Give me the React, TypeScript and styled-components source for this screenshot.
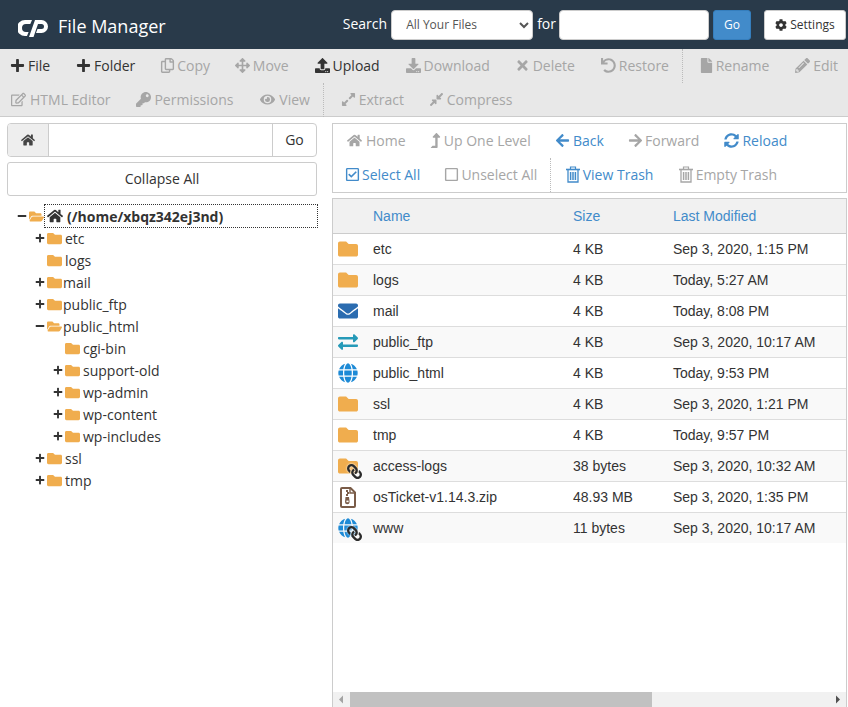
import React from "react";
import styled, { createGlobalStyle } from "styled-components";
import {
  FaArrowLeft,
  FaArrowRight,
  FaArrowsAlt,
  FaCog,
  FaCompressAlt,
  FaDownload,
  FaEnvelope,
  FaExchangeAlt,
  FaExpandAlt,
  FaEye,
  FaFile,
  FaFolder,
  FaFolderOpen,
  FaGlobe,
  FaHome,
  FaKey,
  FaLevelUpAlt,
  FaLink,
  FaMinus,
  FaPencilAlt,
  FaPlus,
  FaRegCheckSquare,
  FaRegCopy,
  FaRegEdit,
  FaRegSquare,
  FaSyncAlt,
  FaTimes,
  FaUndo,
  FaUpload,
} from "react-icons/fa";

const GlobalStyle = createGlobalStyle`
  html, body {
    margin: 0;
    height: 100%;
    overflow: hidden;
    background: #fff;
    font-family: "Open Sans", sans-serif;
    font-size: 14px;
    color: #333;
  }
  * { box-sizing: border-box; }
`;

const Page = styled.div`
  height: 100vh;
  display: flex;
  flex-direction: column;
`;

const TopBar = styled.header`
  height: 49px;
  flex: none;
  background: #293a4a;
  display: flex;
  align-items: center;
  padding: 0 2px 0 18px;
  color: #fff;
`;

const Logo = styled.svg`
  width: 30px;
  height: 18px;
  margin-right: 10px;
  flex: none;
  position: relative;
  top: 3px;
`;

const Title = styled.h1`
  margin: 0;
  font-size: 18px;
  font-weight: 400;
  flex: 1;
  position: relative;
  top: 1px;
`;

const SearchLabel = styled.label`
  font-size: 14px;
  margin: 0 4px;
  position: relative;
  top: -1px;
`;

const ForLabel = styled(SearchLabel)`
  margin-right: 3px;
`;

const SearchSelect = styled.select`
  width: 142px;
  height: 30px;
  background: #fff;
  border: 1px solid #ccc;
  border-radius: 4px;
  font-family: "Open Sans", sans-serif;
  font-size: 12px;
  color: #555;
  padding-left: 10px;
`;

const SearchInput = styled.input`
  width: 150px;
  height: 30px;
  border: 1px solid #ccc;
  border-radius: 4px;
  background: #fff;
`;

const GoButton = styled.button`
  width: 38px;
  height: 30px;
  margin-left: 4px;
  background: #428bca;
  border: 1px solid #357ebd;
  border-radius: 3px;
  color: #fff;
  font-family: inherit;
  font-size: 12px;
  padding: 0;
`;

const SettingsButton = styled.button`
  width: 82px;
  height: 30px;
  margin-left: 13px;
  background: #fff;
  border: 1px solid #ccc;
  border-radius: 3px;
  color: #333;
  font-family: inherit;
  font-size: 12px;
  padding: 0;
  display: flex;
  align-items: center;
  justify-content: center;
  gap: 3px;
  svg { font-size: 12px; }
`;

const ActionBar = styled.nav`
  height: 68px;
  flex: none;
  background: #e8e8e8;
  border-bottom: 1px solid #ccc;
  padding-left: 10px;
`;

const ActionRow = styled.div`
  height: 34px;
  padding-bottom: 2px;
  display: flex;
  align-items: center;
  gap: 25.85px;
`;

const NavRow = styled(ActionRow)`
  gap: 25.2px;
`;

const Action = styled.span<{ $muted?: boolean; $blue?: boolean }>`
  display: inline-flex;
  align-items: center;
  gap: 3px;
  white-space: nowrap;
  font-size: 14px;
  color: ${(p) => (p.$blue ? "#428bca" : p.$muted ? "#a6a6a6" : "#333")};
`;

const IconSlot = styled.span<{ $w: number }>`
  width: ${(p) => p.$w - 3}px;
  flex: none;
  display: flex;
  justify-content: center;
  svg { font-size: 15px; flex: none; }
`;

const Divider = styled.span<{ $after?: number }>`
  align-self: stretch;
  width: 0;
  margin: 0 ${(p) => p.$after ?? -9}px -2px -13px;
  border-left: 1px dotted #bbb;
`;

const Body = styled.main`
  flex: 1;
  min-height: 0;
  display: grid;
  grid-template-columns: 310px 515px;
  column-gap: 15px;
  padding: 6px 1px 0 7px;
`;

const Sidebar = styled.aside`
  display: flex;
  flex-direction: column;
`;

const PathGroup = styled.div`
  height: 34px;
  display: flex;
  border: 1px solid #ccc;
  border-radius: 4px;
  overflow: hidden;
  font-size: 14px;
`;

const PathHome = styled.span`
  width: 41px;
  flex: none;
  background: #eee;
  border-right: 1px solid #ccc;
  display: flex;
  align-items: center;
  justify-content: center;
  color: #444;
`;

const PathInput = styled.input`
  flex: 1;
  min-width: 0;
  border: 0;
`;

const PathGo = styled.span`
  width: 44px;
  flex: none;
  border-left: 1px solid #ccc;
  padding-bottom: 2px;
  display: flex;
  align-items: center;
  justify-content: center;
`;

const CollapseAll = styled.button`
  height: 34px;
  margin-top: 5px;
  padding: 0 0 2px;
  background: #fff;
  border: 1px solid #ccc;
  border-radius: 3px;
  font-family: inherit;
  font-size: 14px;
  color: #333;
`;

const Tree = styled.ul`
  list-style: none;
  margin: 9px 0 0;
  padding: 0;
`;

const TreeRow = styled.li<{ $depth: number }>`
  height: 22px;
  display: flex;
  align-items: center;
  padding-left: ${(p) => 10 + p.$depth * 18}px;
  font-size: 14px;
  color: #333;
`;

const Toggle = styled.span`
  width: 10px;
  margin-right: 2px;
  flex: none;
  display: flex;
  align-items: center;
  justify-content: center;
  svg { font-size: 10px; color: #333; }
`;

const TreeFolder = styled.span`
  width: 15px;
  flex: none;
  display: flex;
  color: #f0ad4e;
  svg { font-size: 15px; }
`;

const TreeName = styled.span<{ $tight?: boolean }>`
  margin-left: ${(p) => (p.$tight ? 1 : 3)}px;
`;

const RootLabel = styled.span`
  flex: 1;
  height: 24px;
  margin-right: -1px;
  border: 1px dotted #333;
  display: flex;
  align-items: center;
  gap: 4px;
  padding-left: 2px;
  font-weight: 700;
  svg { font-size: 16px; }
`;

const FilesPane = styled.section`
  display: flex;
  flex-direction: column;
  min-height: 0;
`;

const FileTools = styled.div`
  height: 70px;
  flex: none;
  border: 1px solid #ccc;
  padding-left: 13px;
`;

const ListBox = styled.div`
  flex: 1;
  min-height: 0;
  margin-top: 5px;
  border-left: 1px solid #ccc;
  border-right: 1px solid #ccc;
  display: flex;
  flex-direction: column;
`;

const ListHead = styled.div`
  height: 36px;
  flex: none;
  background: #f1f1f1;
  border-top: 1px solid #ccc;
  border-bottom: 1px solid #ccc;
  display: grid;
  grid-template-columns: 40px 200px 100px 1fr;
  align-items: center;
  font-family: "Liberation Sans", sans-serif;
  font-size: 14px;
  color: #428bca;
`;

const ListRows = styled.div`
  flex: 1;
  min-height: 0;
`;

const ListRow = styled.div`
  height: 31px;
  display: grid;
  grid-template-columns: 40px 200px 100px 1fr;
  align-items: center;
  border-bottom: 1px solid #ddd;
  font-family: "Liberation Sans", sans-serif;
  font-size: 14px;
  color: #333;
  &:nth-child(even) { background: #f9f9f9; }
  &:last-child { border-bottom: 0; height: 30px; }
`;

const FileIcon = styled.span<{ $color: string }>`
  position: relative;
  width: 20px;
  height: 20px;
  margin-left: 5px;
  display: flex;
  align-items: center;
  justify-content: center;
  color: ${(p) => p.$color};
  svg { font-size: 20px; }
`;

const LinkBadge = styled.span`
  position: absolute;
  right: -4px;
  bottom: -3px;
  display: flex;
  color: #2b2b2b;
  transform: scaleX(-1);
  filter: drop-shadow(0 0 1px #fff);
  svg { font-size: 15px; }
`;

const HScroll = styled.div`
  height: 15px;
  flex: none;
  background: #f1f1f1;
  display: grid;
  grid-template-columns: 17px 302px 1fr 17px;
  align-items: center;
`;

const ScrollThumb = styled.span`
  height: 15px;
  background: #c1c1c1;
`;

const ScrollArrow = styled.svg`
  width: 17px;
  height: 15px;
`;

const TrashIcon = () => (
  <svg viewBox="0 0 14 17" width="14" height="17" fill="none" stroke="currentColor">
    <path d="M4.5 3V1h5v2" strokeWidth="1.2" />
    <path d="M0 3.5h14" strokeWidth="1.6" />
    <path d="M2 4v12h10V4" strokeWidth="1.3" />
    <path d="M4.6 6v8M7 6v8M9.4 6v8" strokeWidth="1.5" />
  </svg>
);

const ZipIcon = () => (
  <svg viewBox="0 0 16 21" width="16" height="21">
    <path
      d="M2 1h8.5L15 5.5V19a1 1 0 0 1-1 1H2a1 1 0 0 1-1-1V2a1 1 0 0 1 1-1z"
      fill="#fff"
      stroke="#7a5c48"
      strokeWidth="2"
    />
    <path d="M10 1v5h5" fill="none" stroke="#7a5c48" strokeWidth="1.4" />
    <path d="M6 3h2v2H6zM7 5h2v2H7zM6 7h2v2H6z" fill="#7a5c48" />
    <path d="M5.5 10h3.5l.6 5a2 2 0 0 1-4.6 0z" fill="#7a5c48" />
    <rect x="6.4" y="13.6" width="2.2" height="1.6" fill="#fff" />
  </svg>
);

const toolsTop = [
  { Icon: FaPlus, label: "File", w: 18 },
  { Icon: FaPlus, label: "Folder", w: 18 },
  { Icon: FaRegCopy, label: "Copy", muted: true, w: 16 },
  { Icon: FaArrowsAlt, label: "Move", muted: true, w: 17 },
  { Icon: FaUpload, label: "Upload", w: 18 },
  { Icon: FaDownload, label: "Download", muted: true, w: 18 },
  { Icon: FaTimes, label: "Delete", muted: true, w: 17 },
  { Icon: FaUndo, label: "Restore", muted: true, w: 18 },
  "divider",
  { Icon: FaFile, label: "Rename", muted: true, w: 16 },
  { Icon: FaPencilAlt, label: "Edit", muted: true, w: 18 },
];

const toolsBottom = [
  { Icon: FaRegEdit, label: "HTML Editor", muted: true, w: 20 },
  { Icon: FaKey, label: "Permissions", muted: true, w: 18 },
  { Icon: FaEye, label: "View", muted: true, w: 20 },
  "divider",
  { Icon: FaExpandAlt, label: "Extract", muted: true, w: 18 },
  { Icon: FaCompressAlt, label: "Compress", muted: true, w: 17 },
];

const navTop = [
  { Icon: FaHome, label: "Home", muted: true, w: 20 },
  { Icon: FaLevelUpAlt, label: "Up One Level", muted: true, w: 13 },
  { Icon: FaArrowLeft, label: "Back", blue: true, w: 17 },
  { Icon: FaArrowRight, label: "Forward", muted: true, w: 16 },
  { Icon: FaSyncAlt, label: "Reload", blue: true, w: 18 },
];

const navBottom = [
  { Icon: FaRegCheckSquare, label: "Select All", blue: true, w: 16 },
  { Icon: FaRegSquare, label: "Unselect All", muted: true, w: 16 },
  "divider",
  { Icon: TrashIcon, label: "View Trash", blue: true, w: 17 },
  { Icon: TrashIcon, label: "Empty Trash", muted: true, w: 17 },
];

const tree = [
  { name: "etc", depth: 1, toggle: "plus" },
  { name: "logs", depth: 1 },
  { name: "mail", depth: 1, toggle: "plus", tight: true },
  { name: "public_ftp", depth: 1, toggle: "plus", tight: true },
  { name: "public_html", depth: 1, toggle: "minus", open: true, tight: true },
  { name: "cgi-bin", depth: 2 },
  { name: "support-old", depth: 2, toggle: "plus" },
  { name: "wp-admin", depth: 2, toggle: "plus" },
  { name: "wp-content", depth: 2, toggle: "plus" },
  { name: "wp-includes", depth: 2, toggle: "plus" },
  { name: "ssl", depth: 1, toggle: "plus" },
  { name: "tmp", depth: 1, toggle: "plus" },
];

const files = [
  { name: "etc", size: "4 KB", date: "Sep 3, 2020, 1:15 PM", kind: "folder" },
  { name: "logs", size: "4 KB", date: "Today, 5:27 AM", kind: "folder" },
  { name: "mail", size: "4 KB", date: "Today, 8:08 PM", kind: "mail" },
  { name: "public_ftp", size: "4 KB", date: "Sep 3, 2020, 10:17 AM", kind: "ftp" },
  { name: "public_html", size: "4 KB", date: "Today, 9:53 PM", kind: "globe" },
  { name: "ssl", size: "4 KB", date: "Sep 3, 2020, 1:21 PM", kind: "folder" },
  { name: "tmp", size: "4 KB", date: "Today, 9:57 PM", kind: "folder" },
  { name: "access-logs", size: "38 bytes", date: "Sep 3, 2020, 10:32 AM", kind: "folder", link: true },
  { name: "osTicket-v1.14.3.zip", size: "48.93 MB", date: "Sep 3, 2020, 1:35 PM", kind: "zip" },
  { name: "www", size: "11 bytes", date: "Sep 3, 2020, 10:17 AM", kind: "globe", link: true },
];

const kindColor: Record<string, string> = {
  folder: "#f0ad4e",
  mail: "#2b6cb0",
  ftp: "#269ab8",
  globe: "#1d8ad6",
  zip: "#7a5c48",
};

const kindGlyph = (kind: string) => {
  if (kind === "mail") return <FaEnvelope />;
  if (kind === "ftp") return <FaExchangeAlt />;
  if (kind === "globe") return <FaGlobe />;
  if (kind === "zip") return <ZipIcon />;
  return <FaFolder />;
};

const renderTools = (items: any[], after?: number) =>
  items.map((item, i) =>
    item === "divider" ? (
      <Divider key={i} $after={after} />
    ) : (
      <Action key={item.label} $muted={item.muted} $blue={item.blue}>
        <IconSlot $w={item.w}>
          <item.Icon />
        </IconSlot>
        {item.label}
      </Action>
    )
  );

const App = () => {
  return (
    <Page>
      <GlobalStyle />
      <TopBar>
        <Logo viewBox="0 0 30 18">
          <path
            d="M14 1l-1.7 4H8a4 4 0 0 0 0 8h2.6L9 17H7A8 8 0 0 1 7 1z"
            fill="#fff"
          />
          <path
            d="M11 18 17 1h6.5a6.5 6.5 0 0 1 0 13H18l1.5-4h4a2.5 2.5 0 0 0 0-5H20l-4.5 13z"
            fill="#fff"
          />
        </Logo>
        <Title>File Manager</Title>
        <SearchLabel>Search</SearchLabel>
        <SearchSelect defaultValue="all">
          <option value="all">All Your Files</option>
        </SearchSelect>
        <ForLabel>for</ForLabel>
        <SearchInput />
        <GoButton>Go</GoButton>
        <SettingsButton>
          <FaCog />
          Settings
        </SettingsButton>
      </TopBar>

      <ActionBar>
        <ActionRow>{renderTools(toolsTop)}</ActionRow>
        <ActionRow>{renderTools(toolsBottom)}</ActionRow>
      </ActionBar>

      <Body>
        <Sidebar>
          <PathGroup>
            <PathHome>
              <FaHome />
            </PathHome>
            <PathInput />
            <PathGo>Go</PathGo>
          </PathGroup>
          <CollapseAll>Collapse All</CollapseAll>
          <Tree>
            <TreeRow $depth={0}>
              <Toggle>
                <FaMinus />
              </Toggle>
              <TreeFolder>
                <FaFolderOpen />
              </TreeFolder>
              <RootLabel>
                <FaHome />
                (/home/xbqz342ej3nd)
              </RootLabel>
            </TreeRow>
            {tree.map((node) => (
              <TreeRow key={node.name} $depth={node.depth}>
                <Toggle>
                  {node.toggle === "plus" && <FaPlus />}
                  {node.toggle === "minus" && <FaMinus />}
                </Toggle>
                <TreeFolder>{node.open ? <FaFolderOpen /> : <FaFolder />}</TreeFolder>
                <TreeName $tight={node.tight}>{node.name}</TreeName>
              </TreeRow>
            ))}
          </Tree>
        </Sidebar>

        <FilesPane>
          <FileTools>
            <NavRow>{renderTools(navTop)}</NavRow>
            <NavRow>{renderTools(navBottom, -10)}</NavRow>
          </FileTools>
          <ListBox>
            <ListHead>
              <span />
              <span>Name</span>
              <span>Size</span>
              <span>Last Modified</span>
            </ListHead>
            <ListRows>
              {files.map((file) => (
                <ListRow key={file.name}>
                  <FileIcon $color={kindColor[file.kind]}>
                    {kindGlyph(file.kind)}
                    {file.link && (
                      <LinkBadge>
                        <FaLink />
                      </LinkBadge>
                    )}
                  </FileIcon>
                  <span>{file.name}</span>
                  <span>{file.size}</span>
                  <span>{file.date}</span>
                </ListRow>
              ))}
            </ListRows>
            <HScroll>
              <ScrollArrow viewBox="0 0 17 15">
                <path d="M6 7.5 10 3.5v8z" fill="#a3a3a3" />
              </ScrollArrow>
              <ScrollThumb />
              <span />
              <ScrollArrow viewBox="0 0 17 15">
                <path d="M11 7.5 7 3.5v8z" fill="#505050" />
              </ScrollArrow>
            </HScroll>
          </ListBox>
        </FilesPane>
      </Body>
    </Page>
  );
};

export default App;
